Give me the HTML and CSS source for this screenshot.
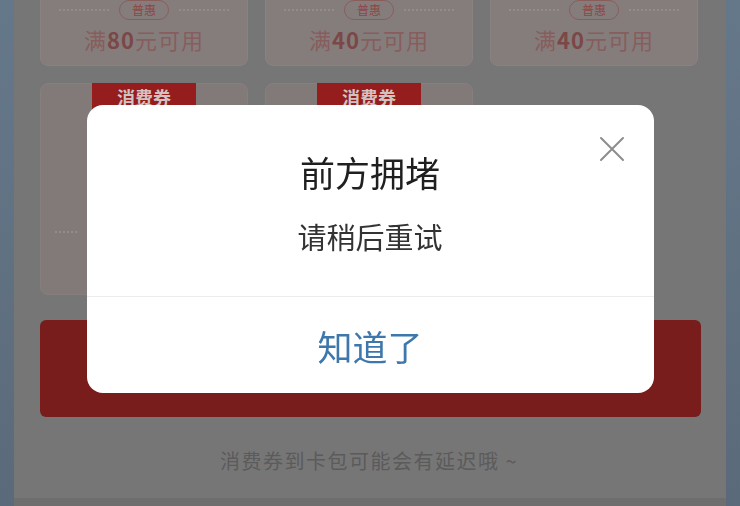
FILE: index.html
```html
<!DOCTYPE html>
<html lang="zh-CN">
<head>
    <meta charset="UTF-8">
    <meta name="viewport" content="width=device-width, initial-scale=1.0">
    <title>消费券</title>
    <link rel="stylesheet" href="styles.css">
</head>
<body>
    <div class="page">
        <div class="coupon-grid">
            <div class="coupon">
                <div class="coupon-head"><span class="dots"></span><span class="pill">普惠</span><span class="dots"></span></div>
                <div class="coupon-rule">满<b>80</b>元可用</div>
            </div>
            <div class="coupon">
                <div class="coupon-head"><span class="dots"></span><span class="pill">普惠</span><span class="dots"></span></div>
                <div class="coupon-rule">满<b>40</b>元可用</div>
            </div>
            <div class="coupon">
                <div class="coupon-head"><span class="dots"></span><span class="pill">普惠</span><span class="dots"></span></div>
                <div class="coupon-rule">满<b>40</b>元可用</div>
            </div>
            <div class="coupon coupon-big">
                <span class="tag">消费券</span>
                <div class="big-line"><span class="dots"></span></div>
            </div>
            <div class="coupon coupon-big">
                <span class="tag">消费券</span>
                <div class="big-line"><span class="dots"></span></div>
            </div>
        </div>
        <button class="grab-btn"></button>
        <p class="tip">消费券到卡包可能会有延迟哦 ~</p>
    </div>

    <div class="mask">
        <div class="dialog">
            <button class="close" aria-label="关闭">
                <svg width="28" height="28" viewBox="0 0 28 28"><path d="M3 3 L25 25 M25 3 L3 25" stroke="#8c8c8c" stroke-width="2" stroke-linecap="round" fill="none"/></svg>
            </button>
            <div class="dialog-body">
                <h2>前方拥堵</h2>
                <p>请稍后重试</p>
            </div>
            <div class="dialog-foot">知道了</div>
        </div>
    </div>
</body>
</html>
```

FILE: styles.css
```css
* {
    box-sizing: border-box;
}
body {
    margin: 0;
    height: 506px;
    overflow: hidden;
    font-family: "Noto Sans CJK SC", "Noto Sans", sans-serif;
    background: linear-gradient(180deg, #65788a, #5b6a7a);
}
.page {
    display: flow-root;
    margin: 0 14px;
    height: 506px;
    background: #777676;
    padding: 0 28px 0 26px;
    border-bottom: 8px solid #6e6e6e;
}
.coupon-grid {
    display: grid;
    grid-template-columns: repeat(3, 208px);
    column-gap: 17px;
    row-gap: 17px;
    margin-top: -24px;
}
.coupon {
    background: #857d7c;
    border: 1px solid #8a8281;
    border-radius: 8px;
    height: 90px;
    display: flex;
    flex-direction: column;
    align-items: center;
}
.coupon-head {
    display: flex;
    align-items: center;
    gap: 10px;
    margin-top: 23px;
}
.dots {
    width: 50px;
    border-top: 2px dotted #958b8b;
}
.pill {
    font-size: 12px;
    line-height: 18px;
    padding: 0 12px;
    color: #8f4545;
    border: 1px solid #8a5d5d;
    border-radius: 10px;
}
.coupon-rule {
    margin-top: 4px;
    font-size: 22px;
    line-height: 30px;
    color: #875d5d;
    letter-spacing: 1px;
}
.coupon-rule b {
    color: #7b4747;
}
.coupon-big {
    height: 212px;
    background: #817a79;
    border-color: #867f7e;
}
.tag {
    display: block;
    width: 104px;
    height: 28px;
    margin-top: -1px;
    background: #961d1d;
    color: #d2c2c2;
    font-size: 18px;
    font-weight: bold;
    line-height: 28px;
    text-align: center;
}
.big-line {
    width: 100%;
    margin-top: 120px;
    padding-left: 14px;
}
.big-line .dots {
    display: block;
    width: 22px;
}
.grab-btn {
    display: block;
    width: 661px;
    height: 97px;
    margin-top: 25px;
    border: none;
    border-radius: 6px;
    background: #781d1b;
}
.tip {
    margin: 30px 0 0;
    text-align: center;
    font-size: 20px;
    line-height: 28px;
    color: #5b5b5b;
    letter-spacing: 1.5px;
}
.mask {
    position: fixed;
    inset: 0;
    display: flex;
    align-items: center;
    justify-content: center;
    padding-bottom: 8px;
}
.dialog {
    position: relative;
    width: 567px;
    background: #fff;
    border-radius: 16px;
    overflow: hidden;
}
.close {
    position: absolute;
    top: 30px;
    right: 28px;
    padding: 0;
    border: none;
    background: none;
    line-height: 0;
}
.dialog-body {
    padding: 45px 20px 40px;
    text-align: center;
}
.dialog-body h2 {
    margin: 0;
    font-size: 35px;
    line-height: 44px;
    font-weight: 400;
    color: #1f1f1f;
}
.dialog-body p {
    margin: 22px 0 0;
    font-size: 29px;
    line-height: 40px;
    color: #333;
}
.dialog-foot {
    border-top: 1px solid #ececec;
    height: 97px;
    display: flex;
    align-items: center;
    justify-content: center;
    font-size: 35px;
    color: #3d77ab;
}
```
